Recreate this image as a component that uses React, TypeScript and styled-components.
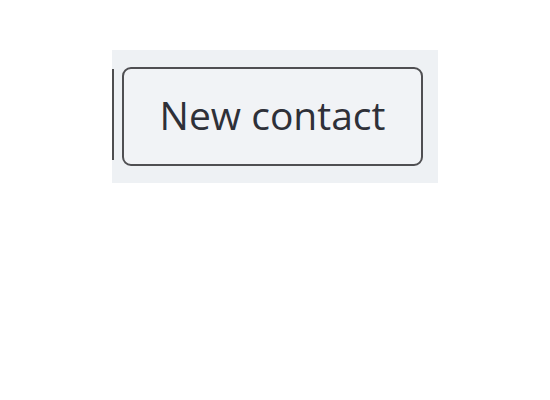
import styled, { createGlobalStyle } from 'styled-components';

const GlobalStyle = createGlobalStyle`
  html, body {
    margin: 0;
    padding: 0;
    background: #ffffff;
    font-family: "Open Sans", "Noto Sans", sans-serif;
  }
`;

const Page = styled.div`
  padding: 50px 0 0 112px;
`;

const Toolbar = styled.div`
  width: 326px;
  height: 133px;
  box-sizing: border-box;
  background: #eef1f4;
  display: flex;
  align-items: flex-start;
  gap: 8px;
  padding: 17px 14px 0 0;
`;

// right edge of the previous button, cut off by the crop
const PrevEdge = styled.div`
  width: 2px;
  height: 91px;
  margin-top: 2px;
  background: #4e4e50;
`;

const ActionButton = styled.button`
  width: 301px;
  height: 99px;
  box-sizing: border-box;
  background: #f1f3f6;
  border: 2px solid #4f4f52;
  border-radius: 9px;
  display: flex;
  align-items: center;
  justify-content: center;
  padding: 0 0 4px;
  font-family: "Open Sans", "Noto Sans", sans-serif;
  font-size: 39px;
  font-weight: 400;
  color: #2e3038;
  cursor: pointer;
`;

export default function App() {
  return (
    <>
      <GlobalStyle />
      <Page>
        <Toolbar>
          <PrevEdge />
          <ActionButton>New contact</ActionButton>
        </Toolbar>
      </Page>
    </>
  );
}
